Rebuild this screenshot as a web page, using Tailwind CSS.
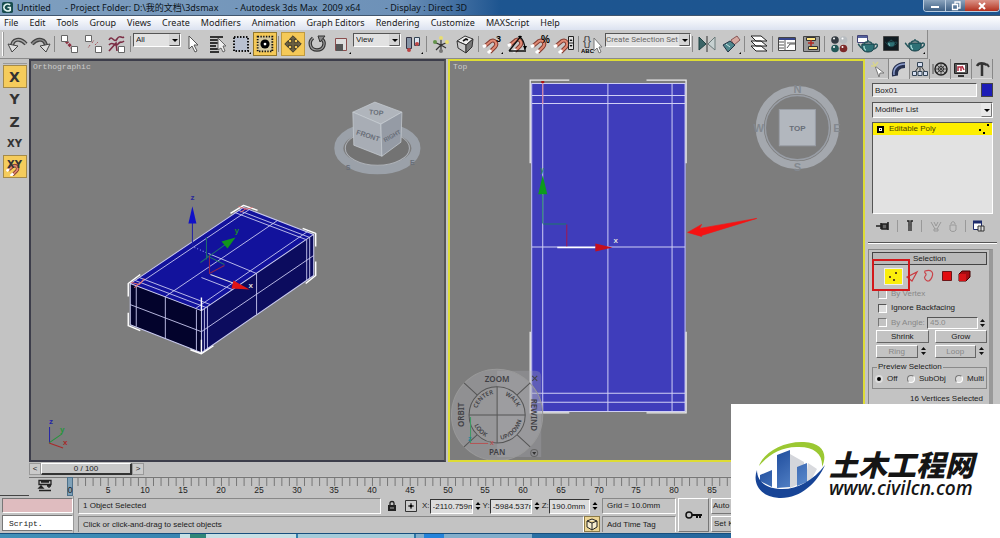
<!DOCTYPE html>
<html lang="en">
<head>
<meta charset="utf-8">
<title>Untitled - Autodesk 3ds Max 2009 x64</title>
<script src="https://cdn.jsdelivr.net/npm/@tailwindcss/browser@4"></script>
</head>
<body class="relative flex h-screen flex-col overflow-hidden bg-[#c3c3c3] font-['Liberation_Sans','Noto_Sans_CJK_SC',sans-serif] text-[9px] leading-3 text-[#1a1a1a]">

<svg class="hidden">
  <defs>
    <g id="magnet"><path d="M6 13l6-5c4-2 7 3 4 6l-5 5" fill="none" stroke="#813a30" stroke-width="4"/><path d="M6 13l6-5c4-2 7 3 4 6l-5 5" fill="none" stroke="#e08a74" stroke-width="2"/><path d="M4 14l3-2M9 20l3-3" stroke="#fff" stroke-width="3"/></g>
    <g id="teapot"><path d="M6 10c-1 6 2 8 6 8s7-2 6-8z" fill="#2d7176" stroke="#173c44"/><path d="M6 14C4 14 4 11 2 10M18 11c4-3 5 2 0 4M8 10c1-3 7-3 8 0M12 8V6" fill="none" stroke="#24565c" stroke-width="1.4"/><path d="M8 12c0 2 1 4 2 4" stroke="#a8dad8" stroke-width="1.5" fill="none"/></g>
    <g id="pointer"><path d="M8 4v13l3-3 3 6 2-1-3-6h4z" fill="#fff" stroke="#555"/></g>
  </defs>
</svg>

<header class="flex h-4 shrink-0 items-center border-b border-[#41566e] bg-linear-to-r from-[#7f9fbf] via-[#6d91b8] via-40% to-[#1d5590] to-50% pl-0.5 font-['Noto_Sans','Noto_Sans_CJK_SC',sans-serif]">
  <svg class="mr-1 size-[11px]" viewBox="0 0 12 12"><rect width="12" height="12" rx="2" fill="#164b4d"/><path d="M9 3C5 1 2 3 2 6s4 5 7 3V6H6" fill="none" stroke="#e1f3ef" stroke-width="1.8"/></svg>
  <h1 class="flex whitespace-nowrap text-[9px] text-[#0b1420]"><span class="w-12">Untitled</span><span class="w-[170px]">- Project Folder: D:\我的文档\3dsmax</span><span class="w-[150px]">- Autodesk 3ds Max&nbsp; 2009 x64</span><span>- Display : Direct 3D</span></h1>
  <div class="ml-auto flex h-3 self-start overflow-hidden rounded-b border border-t-0 border-[#b9ccdf]">
    <button aria-label="Minimize" class="flex w-[22px] items-center justify-center border-r border-[#b9ccdf] bg-linear-to-b from-[#8ba4bd] to-[#3d5f83]"><svg class="size-2.5" viewBox="0 0 10 10"><path d="M1 6h8" stroke="#fff" stroke-width="2"/></svg></button>
    <button aria-label="Restore" class="flex w-[19px] items-center justify-center bg-linear-to-b from-[#8ba4bd] to-[#3d5f83]"><svg class="size-2.5" viewBox="0 0 10 10"><path d="M4 3V1h5v6H7M1.500 3.500h5v5h-5z" fill="none" stroke="#fff" stroke-width="1.3"/></svg></button>
    <button aria-label="Close" class="flex w-[34px] items-center justify-center bg-linear-to-b from-[#d99186] to-[#b22d1b]"><svg class="size-2.5" viewBox="0 0 10 10"><path d="M2 2l6 6M8 2L2 8" stroke="#fff" stroke-width="2"/></svg></button>
  </div>
</header>

<nav class="flex h-[14px] shrink-0 items-center gap-[11px] bg-linear-to-b from-white to-[#dce2f0] pl-1 font-['Noto_Sans',sans-serif] whitespace-nowrap">
  <button>File</button><button>Edit</button><button>Tools</button><button>Group</button><button>Views</button><button>Create</button><button>Modifiers</button><button>Animation</button><button>Graph Editors</button><button>Rendering</button><button>Customize</button><button>MAXScript</button><button>Help</button>
</nav>

<div class="flex h-[29px] shrink-0 items-stretch">
<div class="flex items-center border-r border-b border-[#8a8a8a] bg-[#c8c8c8]">
  <span class="mr-px ml-0.5 h-6 w-0.5 border-x border-[#9a9a9a] border-l-white"></span>
  <button aria-label="Undo"><svg class="size-6" viewBox="0 0 24 24"><path d="M7 15c0-8 8-10 14-3" fill="none" stroke="#444" stroke-width="4"/><path d="M7 15c0-8 8-10 14-3" fill="none" stroke="#aaa" stroke-width="1.5"/><path d="M3 12l4 8 6-6z" fill="#ddd" stroke="#444"/></svg></button>
  <button aria-label="Redo"><svg class="size-6" viewBox="0 0 24 24"><path d="M17 15c0-8-8-10-14-3" fill="none" stroke="#444" stroke-width="4"/><path d="M17 15c0-8-8-10-14-3" fill="none" stroke="#888" stroke-width="1.500"/><path d="M21 12l-4 8-6-6z" fill="#ddd" stroke="#444"/></svg></button>
  <i class="mr-0.5 ml-px h-4 w-px bg-[#888]"></i>
  <button aria-label="Select and link"><svg class="size-6" viewBox="0 0 24 24"><path d="M9 9l7 8" stroke="#8d3142" stroke-width="3" stroke-dasharray="3 1"/><path d="M4.500 3.500h6v6h-6zM14.500 14.500h6v6h-6z" fill="#fff" stroke="#666"/></svg></button>
  <button aria-label="Unlink"><svg class="size-6" viewBox="0 0 24 24"><path d="M11 11l2-3M9 13l-2 3M14 13l3-3" stroke="#a6585f" stroke-dasharray="2 1"/><path d="M4.500 3.500h6v6h-6zM14.500 14.500h6v6h-6z" fill="#fff" stroke="#666"/></svg></button>
  <button aria-label="Bind to space warp"><svg class="size-6" viewBox="0 0 24 24"><path d="M4 8c3-6 5 4 8-1s4 0 7-2M4 13c4-5 6 3 9-1s3 0 6-3M4 19l7-8 1 8" fill="none" stroke="#7c2e45" stroke-width="1.600"/><path d="M13.500 14.500h6v6h-6z" fill="#fff" stroke="#666"/></svg></button>
  <i class="mr-0.5 ml-px h-4 w-px bg-[#888]"></i>
  <div class="relative -mt-2 h-[14px] w-12"><select aria-label="Selection filter" class="size-full appearance-none border border-[#555] border-r-white border-b-white bg-[#e2e2e2] pl-0.5 text-[8px]"><option>All</option></select><svg class="pointer-events-none absolute top-px right-px h-3 w-[11px] bg-[#d4d4d4]" viewBox="0 0 11 12"><path d="M.5 11.500h10V.5" stroke="#555" fill="none"/><path d="M3 5h6L6 8z"/></svg></div>
  <button aria-label="Select object"><svg class="size-6" viewBox="0 0 24 24"><use href="#pointer"/></svg></button>
  <button aria-label="Select by name"><svg class="size-6" viewBox="0 0 24 24"><path d="M5 5h13M5 8h9M5 11h9M5 14h6M5 17h9M5 20h9" stroke="#333" stroke-width="2"/><path d="M13 6v12l3-2 2 4 2-1-2-5h3z" fill="#eee" stroke="#666"/></svg></button>
  <button aria-label="Rectangular selection region"><svg class="size-6" viewBox="0 0 24 24"><path d="M5 5h14v14H5z" fill="#b9c1d1" stroke="#111" stroke-width="2" stroke-dasharray="1.500 1.500"/><path d="M22 20v2h-2z"/></svg></button>
  <button aria-label="Window crossing" class="border border-[#93772a] bg-[#f5c958]"><svg class="size-[22px]" viewBox="0 0 24 24"><path d="M4 4h16v16H4z" fill="#d5c9a0" stroke="#111" stroke-width="2" stroke-dasharray="1.500 1.500"/><circle cx="12" cy="12" r="5"/><circle cx="12" cy="12" r="1.500" fill="#fff"/></svg></button>
  <i class="mr-0.5 ml-px h-4 w-px bg-[#888]"></i>
  <button aria-label="Move" class="border border-[#c09a3e] bg-[#f5c958]"><svg class="size-[22px]" viewBox="0 0 24 24"><path d="M12 3l4 4h-2.500v3.500H17V8l4 4-4 4v-2.500h-3.500V17H16l-4 4-4-4h2.500v-3.500H7V16l-4-4 4-4v2.500h3.500V7H8z" fill="#6b6042" stroke="#222" stroke-width=".8"/></svg></button>
  <button aria-label="Rotate"><svg class="size-6" viewBox="0 0 24 24"><path d="M8 6c-5 4-3 12 4 12s9-7 5-11" fill="none" stroke="#333" stroke-width="3.500"/><path d="M8 6c-5 4-3 12 4 12s9-7 5-11" fill="none" stroke="#999" stroke-width="1.200"/><path d="M13 4l7 0-5 6z" fill="#888" stroke="#333"/></svg></button>
  <button aria-label="Scale"><svg class="size-6" viewBox="0 0 24 24"><path d="M6.500 6.500h11v12h-11z" fill="#ddd" stroke="#8a4d4d"/><path d="M7 12h7v7H7z" fill="#555"/><path d="M22 20v2h-2z"/></svg></button>
  <div class="relative -mt-2 h-[14px] w-12"><select aria-label="Coordinate system" class="size-full appearance-none border border-[#555] border-r-white border-b-white bg-[#e2e2e2] pl-0.5 text-[8px]"><option>View</option></select><svg class="pointer-events-none absolute top-px right-px h-3 w-[11px] bg-[#d4d4d4]" viewBox="0 0 11 12"><path d="M.5 11.500h10V.5" stroke="#555" fill="none"/><path d="M3 5h6L6 8z"/></svg></div>
  <button aria-label="Pivot center"><svg class="size-6" viewBox="0 0 24 24"><path d="M5.500 5.500h5v11h-5z" fill="#8795a7" stroke="#334"/><path d="M13.500 5.500h5v8h-5z" fill="#dce4ef" stroke="#345"/><circle cx="8" cy="18" r="2" fill="#b44"/><circle cx="16" cy="12" r="2" fill="#b44"/><path d="M22 20v2h-2z"/></svg></button>
  <i class="mr-0.5 ml-px h-4 w-px bg-[#888]"></i>
  <button aria-label="Manipulate"><svg class="size-6" viewBox="0 0 24 24"><path d="M12 6v13M5 10l7 3 7-3M12 13l-5 5M12 13l5 3" stroke="#333" stroke-width="1.200" fill="none"/><circle cx="12" cy="6" r="2" fill="#e8dd72"/><circle cx="18" cy="10" r="2" fill="#e8dd72"/><circle cx="6" cy="10" r="2" fill="#63934b"/><circle cx="12" cy="19" r="2" fill="#777"/></svg></button>
  <button aria-label="Keyboard shortcut override"><svg class="size-6" viewBox="0 0 24 24"><path d="M4 9l8-5 8 3-7 6z" fill="#eee" stroke="#333"/><path d="M4 9l9 4v8l-8-5z" fill="#ccc" stroke="#333"/><path d="M13 13l7-6-1 8-6 6z" fill="#777" stroke="#333"/><path d="M10 9l3-2 2 1" stroke="#111" stroke-width="1.800" fill="none"/></svg></button>
  <i class="mr-0.5 ml-px h-4 w-px bg-[#888]"></i>
  <button aria-label="Snaps toggle"><svg class="size-6" viewBox="0 0 24 24"><use href="#magnet" y="1" x="-2"/><text x="15" y="10" font-size="9" font-weight="bold">3</text><path d="M22 20v2h-2z"/></svg></button>
  <button aria-label="Angle snap"><svg class="size-6" viewBox="0 0 24 24"><use href="#magnet" x="-1"/><path d="M4 19h17M4 19L16 4M14 4c4 3 6 8 6 14" stroke="#111" fill="none" stroke-width="1.300"/><path d="M13 4h4l-2 3zM18 14h4l-2 4z"/></svg></button>
  <button aria-label="Percent snap"><svg class="size-6" viewBox="0 0 24 24"><use href="#magnet" y="1" x="-2"/><text x="12" y="11" font-size="10" font-weight="bold">%</text></svg></button>
  <button aria-label="Spinner snap"><svg class="size-6" viewBox="0 0 24 24"><use href="#magnet" y="1" x="-3"/><path d="M15.500 4.500h5v13h-5zM15 11h6" fill="#ddd" stroke="#222"/><path d="M16.500 9l1.500-2 1.500 2zM16.500 13l1.500 2 1.500-2z"/></svg></button>
  <i class="mr-0.5 ml-px h-4 w-px bg-[#888]"></i>
  <button aria-label="Edit named selection sets"><svg class="size-6" viewBox="0 0 24 24"><text x="2" y="13" font-size="12" fill="#444">{}</text><text x="0" y="21" font-size="6" font-weight="bold">ABC</text><path d="M13 6v13l3-3 2 5 2-1-2-5h3z" fill="#fff" stroke="#777"/></svg></button>
  <div class="relative -mt-2 h-[14px] w-[86px]"><select aria-label="Named selection sets" class="size-full appearance-none border border-[#555] border-r-white border-b-white bg-[#e2e2e2] font-[Roboto,sans-serif] text-[8px] text-[#666]"><option>Create Selection Set</option></select><svg class="pointer-events-none absolute top-px right-px h-3 w-[11px] bg-[#d4d4d4]" viewBox="0 0 11 12"><path d="M.5 11.500h10V.5" stroke="#555" fill="none"/><path d="M3 5h6L6 8z"/></svg></div>
  <i class="mr-0.5 ml-px h-4 w-px bg-[#888]"></i>
  <button aria-label="Mirror"><svg class="size-6" viewBox="0 0 24 24"><path d="M4 5v13l7-6z" fill="#3b6467" stroke="#244"/><path d="M20 5v13l-7-6z" fill="#c7d1d1" stroke="#6a7a7a"/><path d="M12 4v16" stroke="#333"/></svg></button>
  <button aria-label="Align"><svg class="size-6" viewBox="0 0 24 24"><path d="M12 8l6-4 3 4-6 5z" fill="#d5a9a1" stroke="#855"/><path d="M4 13l7-4 5 4-7 7z" fill="#4e868c" stroke="#234"/><path d="M7 12l4 3" stroke="#cfe6e6"/><path d="M22 20v2h-2z"/></svg></button>
  <i class="mr-0.5 ml-px h-4 w-px bg-[#888]"></i>
  <button aria-label="Layer manager"><svg class="size-6" viewBox="0 0 24 24"><path d="M4 14h10l6 5H9zM4 9h10l6 5H9zM4 4h10l6 5H9z" fill="#fff" stroke="#222"/></svg></button>
  <i class="mr-0.5 ml-px h-4 w-px bg-[#888]"></i>
  <button aria-label="Curve editor"><svg class="size-6" viewBox="0 0 24 24"><path d="M3.500 5.500h17v13h-17z" fill="#fff" stroke="#444"/><path d="M4 7h16" stroke="#37458c" stroke-width="2"/><path d="M4 10h5M4 13h5M4 16h5M10 8v10M12 16l3-4h5M12 11h8" stroke="#555" fill="none"/></svg></button>
  <button aria-label="Schematic view"><svg class="size-6" viewBox="0 0 24 24"><path d="M4.500 4.500h16v15h-16z" fill="#999" stroke="#444"/><path d="M7.500 5.500h9v3h-9zM9.500 14.500h9v3h-9z" fill="#ffe681" stroke="#333"/><path d="M12 8v6M9 11h6" stroke="#b32a20" stroke-width="1.500"/></svg></button>
  <i class="mr-0.5 ml-px h-4 w-px bg-[#888]"></i>
  <button aria-label="Material editor"><svg class="size-6" viewBox="0 0 24 24"><circle cx="8" cy="8" r="3.800" fill="#333b42"/><circle cx="16.500" cy="8" r="3.800" fill="#b7bcc0"/><circle cx="8" cy="16.500" r="3.800" fill="#225857"/><circle cx="16.500" cy="16.500" r="3.800" fill="#7c2929"/><g fill="#fff"><circle cx="7" cy="6.500" r="1"/><circle cx="15.500" cy="6.500" r="1"/><circle cx="7" cy="15" r="1"/><circle cx="15.500" cy="15" r="1"/></g></svg></button>
  <i class="mr-0.5 ml-px h-4 w-px bg-[#888]"></i>
  <button aria-label="Render setup"><svg class="size-6" viewBox="0 0 24 24"><path d="M2.500 3.500h10v7h-10z" fill="#fff" stroke="#447"/><path d="M3 5h9" stroke="#54619c" stroke-width="2"/><use href="#teapot" x="1" y="2"/></svg></button>
  <button aria-label="Rendered frame window"><svg class="size-6" viewBox="0 0 24 24"><path d="M4.500 4.500h15v14h-15z" fill="#111c22" stroke="#444"/><g transform="translate(5 4) scale(.6)"><use href="#teapot"/></g></svg></button>
  <button aria-label="Quick render"><svg class="size-6" viewBox="0 0 24 24"><use href="#teapot" y="1"/><path d="M22 20v2h-2z"/></svg></button>
</div>
</div>

<main class="flex min-h-0 flex-1">
  <aside class="flex w-[29px] shrink-0 flex-col items-center border-b border-[#444] pt-1">
    <div class="h-px w-6 bg-[#999]"></div>
    <div class="flex flex-col pt-px font-['DejaVu_Sans',sans-serif] font-bold text-[#333]">
      <button class="h-[23px] w-6 border border-[#a58a48] bg-[#f5cc5c] text-[14px]">X</button>
      <button class="h-[22px] w-6 text-[14px]">Y</button>
      <button class="h-[23px] w-6 text-[14px]">Z</button>
      <button class="h-[22px] w-6 text-[10px]">XY</button>
      <button class="relative h-[23px] w-6 border border-[#a58a48] bg-[#f5cc5c] pb-1 text-[10px]"><svg class="absolute inset-0 size-5" viewBox="0 0 24 24"><use href="#magnet" y="4" x="-1"/></svg><span class="relative">XY</span></button>
    </div>
  </aside>

  <section class="flex min-w-0 flex-1 flex-col">
    <div class="flex min-h-0 flex-1 gap-0.5">
      <div class="min-w-0 flex-1 border-2 border-[#3c3d4a] border-r-[#555] bg-[#7d7d7d]">
        <svg class="size-full" viewBox="31 62 414 398" preserveAspectRatio="xMinYMin slice">
          <text x="33" y="70" font-family="Liberation Mono" font-size="8" fill="#ccc">Orthographic</text>
          <g stroke-linejoin="round">
            <path d="M130 284L243 208l70 27-112 76z" fill="#12129c"/>
            <path d="M130 284l71 27v42l-71-28z" fill="#03032c"/>
            <path d="M201 311l112-76v41l-112 77z" fill="#0c0c5e"/>
            <g fill="none" stroke="#c9caf0">
              <path d="M130 284L243 208l70 27-112 76zM130 284v41l71 28V311M201 353l112-77v-41"/>
              <path d="M136 286L249 210M195 309L307 232M165 297L277 221M208 254l48 20v41M201 278l31 12M135 281l71 27M139 278l71 27M234 213l71 27M238 211l71 27M130 305l71 27 112-76M165 297v42M136 286v41M196 310v41M204 309v42M207 307v42M306 240v41M309 238v41" stroke-width=".9"/>
              <path d="M128 297v-13l12-9M128 313v13l12 5M190 350l11 4 12-8M230 214l13-8 14 5M302 229l13 5v13M315 262v14l-10 8M201 298v13M201 340v13" stroke="#fff" stroke-width="1.400"/>
            </g>
            <path d="M131 283l8 2 5-6M138 285l-4 3M238 207l8 3 6-2M240 213l6-4" fill="none" stroke="#e26b6b"/>
          </g>
          <path d="M192 246v-24" stroke="#2020a5"/><path d="M188 224l4-17 4 17z" fill="#1010c8"/><text x="190" y="201" font-size="8" font-weight="bold" fill="#2a2a99">z</text>
          <path d="M194 248l14 6" stroke="#99f" stroke-dasharray="1 2"/>
          <path d="M200 263l25-18M206 238v22M206 256l18 9" stroke="#1f6f6d" fill="none"/><path d="M221 242l14-4-8 11z" fill="#11951c"/><text x="234" y="234" font-size="8" font-weight="bold" fill="#1e8b2b">y</text>
          <path d="M209 256v18l15-8" stroke="#8f2650" fill="none"/><path d="M210 275l24 9" stroke="#ddd"/><path d="M233 281l16 9-18-1z" fill="#e01515"/><text x="248" y="288" font-size="8" font-weight="bold" fill="#ddd">x</text>
          <g fill="none"><path d="M49.500 443v-16" stroke="#2525a8"/><path d="M49 443l13-9" stroke="#22963a"/><path d="M49 443l14 5" stroke="#a82929"/></g>
          <g font-size="8" font-weight="bold"><text x="49" y="424" fill="#2525a8">z</text><text x="60" y="432" fill="#22963a">y</text><text x="63" y="445" fill="#a82929">x</text></g>
          <ellipse cx="376.500" cy="149" rx="38.500" ry="21.500" fill="none" stroke="#9ba1a9" stroke-width="9"/>
          <ellipse cx="376.500" cy="149" rx="32" ry="17" fill="#737373" stroke="#aeb2b8"/>
          <g stroke="#c9ced4" stroke-width=".7"><path d="M374 103l27 10-21 12-28-12z" fill="#b0b5bc"/><path d="M352 113l28 12 1 32-28-11z" fill="#a8adb5"/><path d="M380 125l21-12-1 30-19 14z" fill="#959ba5"/></g>
          <g font-size="8" font-weight="bold" fill="#686e78"><text transform="translate(368 115) rotate(6)" font-size="7">TOP</text><text transform="translate(355 135) rotate(18)" font-size="7">FRONT</text><text transform="translate(384 143) rotate(-29)" font-size="6">RIGHT</text><text x="345" y="171" font-size="7">S</text><text x="409" y="166" font-size="7">E</text></g>
        </svg>
      </div>
      <div class="min-w-0 flex-1 border-2 border-[#dedc35] bg-[#7d7d7d]">
        <svg class="size-full" viewBox="450 62 413 398" preserveAspectRatio="xMinYMin slice">
          <text x="453" y="70" font-family="Liberation Mono" font-size="8" fill="#ccc">Top</text>
          <path d="M531 84h154v328H531z" fill="#3f3dbb"/>
          <path d="M531.500 84.500h153v327h-153zM542.500 84v328M607.500 84v328M671.500 84v328M531 96.500h154M531 104.500h154M531 247.500h154M531 393.500h154M531 402.500h154" fill="none" stroke="#cfcff5"/>
          <path d="M569 81h-39v83M646 81h39.500v83M530 332v81h39M646 413h39.500v-81" fill="none" stroke="#eee" stroke-width="1.300"/>
          <path d="M542.500 83v22" stroke="#d87a9a"/><path d="M541 83h3" stroke="#b01010" stroke-width="2"/>
          <path d="M542.500 224v-29M543 224.500h23" stroke="#1c7a68"/><path d="M538 195l4.500-19 4.500 19z" fill="#0d9b1c"/><text x="540" y="173" font-size="7" font-weight="bold" fill="#2c8560">y</text>
          <path d="M566.500 225v22" stroke="#a3184e"/><path d="M557 248h38" stroke="#fff" stroke-width="1.500"/><path d="M595 244l17 4-17 4z" fill="#c60f1c"/><text x="613" y="244" font-size="8" font-weight="bold" fill="#ddd">x</text>
          <path d="M687 233l14-8-2 4 57-10-55 17 0 1z" fill="#f51212" stroke="#f51212" stroke-width=".6"/>

          <circle cx="796.500" cy="128.500" r="37.500" fill="none" stroke="#a4a8ae" stroke-width="8"/><circle cx="796.500" cy="128.500" r="32" fill="none" stroke="#999ea6" stroke-width="1.500"/>
          <path d="M778.500 110.500h36v36h-36z" fill="#b2b7be" stroke="#9a9fa7"/>
          <g font-weight="bold" fill="#686e78" text-anchor="middle"><text x="796.500" y="132" font-size="8">TOP</text><g font-size="11" fill="#83888f"><text x="796.500" y="94">N</text><text x="796.500" y="172">S</text><text x="758" y="133">W</text><text x="836" y="133">E</text></g></g>

          <path d="M497 371h38q6 0 6 6v80h-44z" fill="#aaaab2" fill-opacity=".3"/>
          <circle cx="497" cy="415" r="45.500" fill="#b5b5bb" fill-opacity=".35" stroke="#999"/>
          <circle cx="497" cy="415" r="28" fill="#aaa" fill-opacity=".3" stroke="#555"/>
          <path d="M497 387v56M469 415h56M477 395l-13-12M517 395l13-12M477 435l-13 12M517 435l13 12" stroke="#555"/>
          <path id="arcTop" d="M476 415a21 21 0 0 1 42 0" fill="none"/><path id="arcBottom" d="M472 415a25 25 0 0 0 50 0" fill="none"/>
          <g font-family="Noto Sans" font-weight="600" fill="#3f3f44" text-anchor="middle">
            <text x="497" y="382" font-size="8">ZOOM</text><text x="497" y="455" font-size="8">PAN</text>
            <text transform="translate(464 415) rotate(-90)" font-size="8">ORBIT</text><text transform="translate(531 415) rotate(90)" font-size="8">REWIND</text>
            <text font-size="6"><textPath href="#arcTop" startOffset="27%">CENTER</textPath></text><text font-size="6"><textPath href="#arcTop" startOffset="75%">WALK</textPath></text>
            <text font-size="6"><textPath href="#arcBottom" startOffset="24%">LOOK</textPath></text><text font-size="6"><textPath href="#arcBottom" startOffset="74%">UP/DOWN</textPath></text>
          </g>
          <path d="M532 376l5 5M537 376l-5 5" stroke="#444"/><circle cx="534" cy="453" r="3.500" fill="none" stroke="#666"/><path d="M532 452h4l-2 3z" fill="#333"/>
          <path d="M470.500 443v-26" stroke="#3c9b62"/><path d="M470 443.500h18" stroke="#b45454"/><text x="468" y="441" font-size="7" font-weight="bold" fill="#248697">z</text><text x="490" y="445" font-size="7" font-weight="bold" fill="#b45454">x</text>
        </svg>
      </div>
    </div>
    <div class="flex h-[14px] shrink-0 items-center bg-[#bfbfbf]">
      <button class="h-3 w-3 border border-[#999] bg-[#cacaca] text-[8px] leading-[10px]">&lt;</button>
      <button class="h-3 w-[91px] border border-white border-r-2 border-b-2 border-r-[#333] border-b-[#333] bg-[#c8c8c8] text-[8px] leading-[9px]">0 / 100</button>
      <button class="h-3 w-3 border border-[#999] bg-[#cacaca] text-[8px] leading-[10px]">&gt;</button>
    </div>
    <div class="h-5 shrink-0">
      <svg class="size-full" viewBox="29 476 836 20" preserveAspectRatio="xMinYMin slice">
        <path d="M29 477.500h836" stroke="#777"/>
        <path d="M77.500 482h755" stroke="#777" stroke-width="8" stroke-dasharray="1 6.550"/>
        <rect x="67.500" y="477.500" width="5" height="18" fill="#7fa1b8" stroke="#4d7089"/>
        <path d="M39 480.500h12v4H39zM39 490.500h12M41 488v-2M41 486l-2 2h4zM49 485v3M47 486h4M41 482h8" fill="none" stroke="#222" stroke-width="1.300"/>
        <g font-size="8.500" text-anchor="middle" fill="#222"><text x="70" y="493">0</text><text x="108" y="493">5</text><text x="145" y="493">10</text><text x="183" y="493">15</text><text x="221" y="493">20</text><text x="259" y="493">25</text><text x="297" y="493">30</text><text x="334" y="493">35</text><text x="372" y="493">40</text><text x="410" y="493">45</text><text x="448" y="493">50</text><text x="485" y="493">55</text><text x="523" y="493">60</text><text x="561" y="493">65</text><text x="599" y="493">70</text><text x="636" y="493">75</text><text x="674" y="493">80</text><text x="712" y="493">85</text></g>
      </svg>
    </div>
  </section>

  <aside class="w-[135px] shrink-0 overflow-hidden pr-[7px] pl-[7px] text-[8px] leading-3">
    <div class="-ml-1 flex h-5 items-center border-b border-[#ddd]">
      <button aria-label="Create" class="flex h-5 w-[21px] items-center justify-center border-r border-[#888]"><svg class="size-4" viewBox="0 0 16 16"><path d="M5 5l9 7-4 0-1 4z" fill="#fff" stroke="#777"/><path d="M3 1l2 4-4 0M8 1L5 5" stroke="#d8d48e" stroke-width="1.500" fill="none"/></svg></button>
      <button aria-label="Modify" class="flex h-5 w-[21px] items-center justify-center border-r border-[#888] bg-[#d0d0d0]"><svg class="size-4" viewBox="0 0 16 16"><path d="M4 15C3 8 7 4 14 4" fill="none" stroke="#27314f" stroke-width="6"/><path d="M3 14C2 7 7 3 14 3" fill="none" stroke="#8fa0cf" stroke-width="1.500"/></svg></button>
      <button aria-label="Hierarchy" class="flex h-5 w-[21px] items-center justify-center border-r border-[#888]"><svg class="size-4" viewBox="0 0 16 16"><path d="M8 5v5M7 5l-4 6M9 5l4 6" stroke="#333"/><path d="M5.500 1.500h5v4h-5zM.5 10.500h4v4h-4zM6 10.500h4v4H6zM11.500 10.500h4v4h-4z" fill="#d5def0" stroke="#345"/></svg></button>
      <button aria-label="Motion" class="flex h-5 w-[21px] items-center justify-center border-r border-[#888]"><svg class="size-4" viewBox="0 0 16 16"><circle cx="9" cy="8" r="6" fill="#bbb" stroke="#222" stroke-width="1.500"/><circle cx="9" cy="8" r="2.500" fill="#eee" stroke="#222"/><path d="M9 2v12M3 8h12M5 4l8 8M13 4l-8 8M1 3v10" stroke="#333" stroke-width=".8"/></svg></button>
      <button aria-label="Display" class="flex h-5 w-[21px] items-center justify-center border-r border-[#888]"><svg class="size-4" viewBox="0 0 16 16"><path d="M1.500 2.500h13v10h-13z" fill="#555" stroke="#222"/><path d="M4 4h8v7H4z" fill="#fff"/><path d="M5 10V6h3v4M9 5l2 4" stroke="#b32b40" stroke-width="1.500" fill="none"/><path d="M5 15h6" stroke="#333" stroke-width="2"/></svg></button>
      <button aria-label="Utilities" class="flex h-5 w-[21px] items-center justify-center border-r border-[#888]"><svg class="size-4" viewBox="0 0 16 16"><path d="M3 5c2-4 7-3 10-1M8 3v12" stroke="#333" stroke-width="2.500" fill="none"/><path d="M13 3l2 3" stroke="#333" stroke-width="2"/></svg></button>
    </div>
    <div class="mt-1 flex items-center gap-1">
      <input aria-label="Object name" value="Box01" class="h-[14px] w-0 flex-1 border border-[#555] border-r-white border-b-white bg-[#e0e0e0] pl-0.5">
      <button aria-label="Object color" class="h-[14px] w-3 border border-[#444] bg-[#1c1cb6]"></button>
    </div>
    <div class="relative mt-[5px] h-4"><select aria-label="Modifier List" class="size-full appearance-none border border-[#555] border-r-white border-b-white bg-[#e0e0e0] pl-0.5"><option>Modifier List</option></select><svg class="pointer-events-none absolute top-px right-px h-[14px] w-[11px] bg-[#e8e8e8]" viewBox="0 0 11 14"><path d="M.5 13.500h10V.5" stroke="#777" fill="none"/><path d="M3 6h6L6 9z"/></svg></div>
    <div class="mt-1 h-[92px] border border-[#555] border-r-white border-b-white bg-[#e2e2e2]">
      <div class="flex h-3 items-center bg-[#fdee00] pl-1"><svg class="mr-[5px] size-[7px]" viewBox="0 0 7 7"><path d="M0 0h7v7H0z"/><path d="M2 2h3v3H2z" fill="#fff"/><path d="M3 3h1v1H3z"/></svg><span class="flex-1 text-[#4a4400]">Editable Poly</span><svg class="mr-0.5 size-3" viewBox="0 0 12 12"><path d="M9 1h2v2H9zM1 6h2v2H1zM5 9h2v2H5z"/></svg></div>
    </div>
    <div class="mt-1 flex h-4 items-center justify-between pr-2 pl-1">
      <button aria-label="Pin stack"><svg class="h-3 w-[14px]" viewBox="0 0 14 12"><path d="M0 6h5M5 3v6M6 4h5v5H6zM12 2v8" stroke="#222" stroke-width="1.600" fill="#666"/></svg></button><i class="h-3 w-px bg-[#999]"></i>
      <button aria-label="Show end result"><svg class="h-3 w-2" viewBox="0 0 8 12"><path d="M1 1h2v10M7 1H5v10" stroke="#222" stroke-width="1.300" fill="none"/><path d="M2 5h4" stroke="#555"/></svg></button><i class="h-3 w-px bg-[#999]"></i>
      <button aria-label="Make unique"><svg class="size-3" viewBox="0 0 12 12"><path d="M1 2l4 7M11 2L7 9M4 2l2 4 2-4M4 9h4v2H4z" stroke="#999" fill="none"/></svg></button>
      <button aria-label="Remove modifier"><svg class="h-3 w-2" viewBox="0 0 8 12"><path d="M1 5h6v5c-1 2-5 2-6 0zM2 4c0-3 4-3 4 0" stroke="#999" fill="none"/></svg></button><i class="h-3 w-px bg-[#999]"></i>
      <button aria-label="Configure sets"><svg class="size-3" viewBox="0 0 12 12"><path d="M.5 1.500h8v8h-8z" fill="#fff" stroke="#1e2c6c"/><path d="M0 2h9" stroke="#1e2c6c" stroke-width="3"/><path d="M5 6h6v5H5zM8 6v5" fill="#ddd" stroke="#333"/></svg></button>
    </div>
    <div class="-mx-1 mt-2 mb-[5px] h-0.5 border-b border-white bg-[#555]"></div>
    <div class="-ml-1 border-t border-l border-r-4 border-white border-t-[#888] border-r-[#999] border-l-[#888] pt-0.5 pr-0.5 pl-[3px]">
      <button class="relative block h-[13px] w-full border border-[#444] bg-[#b9b9b9] text-center leading-[11px]"><span class="absolute left-1">-</span>Selection</button>
      <div class="relative mt-0.5 flex h-[18px] items-center pl-3">
        <button aria-label="Vertex" class="mr-0.5 h-[17px] w-[19px] border border-[#eee] bg-[#fbee0c]"><svg class="size-4" viewBox="0 0 16 16"><path d="M10 3h2v2h-2zM4 7h2v2H4zM8 10h2v2H8z" fill="#62451a"/></svg></button>
        <button aria-label="Edge"><svg class="h-4 w-[15px]" viewBox="0 0 15 16"><path d="M2 9l10-5-5 9z" fill="none" stroke="#c93a40" stroke-width="1.200"/></svg></button>
        <button aria-label="Border"><svg class="h-4 w-[18px]" viewBox="0 0 18 16"><path d="M5 3c6-2 9 1 7 6s-5 5-7 2 2-3 1-5-2-1-1-3z" fill="none" stroke="#c9444a" stroke-width="1.200"/></svg></button>
        <button aria-label="Polygon"><svg class="h-4 w-[18px]" viewBox="0 0 18 16"><path d="M4.500 3.500h9v9h-9z" fill="#e30d10" stroke="#6d1518"/></svg></button>
        <button aria-label="Element"><svg class="h-4 w-4" viewBox="0 0 16 16"><path d="M3 6l3-3h8v6l-4 4H3z" fill="#a40d12" stroke="#400"/><path d="M3 6h7v7H3z" fill="#d71317"/></svg></button>
        <div class="pointer-events-none absolute -top-2 left-0 z-10 h-8 w-[38px] border-2 border-[#d3191c]"></div>
      </div>
      <label class="mt-0.5 flex h-[14px] items-center gap-1 pl-1.5 text-[#888]"><input type="checkbox" disabled class="size-[9px] appearance-none border border-[#777] border-r-white border-b-white">By Vertex</label>
      <label class="flex h-[14px] items-center gap-1 pl-1.5"><input type="checkbox" class="size-[9px] appearance-none border border-[#555] border-r-white border-b-white bg-[#ddd]">Ignore Backfacing</label>
      <div class="flex h-[15px] items-center pl-1.5 text-[#888]"><label class="flex w-[49px] items-center gap-1 whitespace-nowrap"><input type="checkbox" disabled class="size-[9px] appearance-none border border-[#777] border-r-white border-b-white">By Angle:</label><input aria-label="Angle" value="45.0" disabled class="h-3 w-0 flex-1 border border-[#555] border-r-white border-b-white bg-[#c8c8c8] pl-0.5"><svg class="h-3 w-[9px]" viewBox="0 0 9 12"><path d="M2 5l2.500-3L7 5zM2 7l2.500 3L7 7z" fill="#111"/></svg></div>
      <div class="grid grid-cols-2 gap-x-1.5 gap-y-0.5 pl-1 leading-[11px]">
        <button class="h-[13px] border border-white border-r-[#666] border-b-[#666]">Shrink</button><button class="h-[13px] border border-white border-r-[#666] border-b-[#666]">Grow</button>
        <div class="flex text-[#888]"><button class="h-[13px] flex-1 border border-white border-r-[#666] border-b-[#666]" disabled>Ring</button><svg class="h-3 w-[11px]" viewBox="0 0 9 12"><path d="M2 5l2.500-3L7 5zM2 7l2.500 3L7 7z" fill="#111"/></svg></div>
        <div class="flex text-[#888]"><button class="h-[13px] flex-1 border border-white border-r-[#666] border-b-[#666]" disabled>Loop</button><svg class="h-3 w-[11px]" viewBox="0 0 9 12"><path d="M2 5l2.500-3L7 5zM2 7l2.500 3L7 7z" fill="#111"/></svg></div>
      </div>
      <fieldset class="mt-[3px] border border-[#8a8a8a] pb-[3px]"><legend class="ml-1 px-px">Preview Selection</legend>
        <div class="flex items-center justify-between px-0.5">
          <label class="flex items-center gap-1"><input type="radio" name="preview" checked class="size-2 appearance-none rounded-full border border-[#777] bg-[#eee] checked:border-2 checked:border-[#ddd] checked:bg-black">Off</label>
          <label class="flex items-center gap-1"><input type="radio" name="preview" class="size-2 appearance-none rounded-full border border-[#777] border-r-white border-b-white bg-[#ddd]">SubObj</label>
          <label class="flex items-center gap-1"><input type="radio" name="preview" class="size-2 appearance-none rounded-full border border-[#777] border-r-white border-b-white bg-[#ddd]">Multi</label>
        </div>
      </fieldset>
      <p class="mt-1 pr-1 text-right">16 Vertices Selected</p>
    </div>
  </aside>
</main>

<footer class="flex h-[37px] shrink-0 text-[8px]">
  <div class="flex w-[74px] flex-col gap-0.5 border-r border-[#999] py-0.5 pl-0.5">
    <div class="h-[15px] border border-[#777] border-r-white border-b-white bg-[#dfbcbf]"></div>
    <input aria-label="Script" value="Script." class="h-4 w-full border border-[#777] border-r-white bg-white pl-1.5 font-['Liberation_Mono',monospace]">
  </div>
  <div class="flex flex-1 flex-col gap-0.5 pt-0.5 pl-1">
    <div class="flex h-4 items-center">
      <div class="h-4 w-[303px] border border-[#888] border-r-white border-b-white pl-1 leading-[14px]">1 Object Selected</div>
      <button aria-label="Lock selection" class="ml-1.5"><svg class="h-3 w-2.5" viewBox="0 0 10 12"><path d="M1 5h8v6H1z" fill="#222"/><path d="M3 5V3c0-2 4-2 4 0v2" fill="none" stroke="#222" stroke-width="1.300"/><path d="M3 8h4" stroke="#aaa"/></svg></button>
      <button aria-label="Absolute mode" class="mr-1 ml-2"><svg class="h-3 w-[13px]" viewBox="0 0 13 12"><path d="M.5.5h11v11H.5z" fill="#ccc" stroke="#333"/><path d="M6 3v6M3 6h6" stroke="#222"/><circle cx="6" cy="6" r="1.500"/></svg></button>
      <label for="cx">X:</label><input id="cx" value="-2110.759mm" class="h-[15px] w-[43px] border border-[#333] border-r-white border-b-white bg-[#dcdcdc] pl-0.5"><svg class="h-3 w-2.5" viewBox="0 0 9 12"><path d="M2 5l2.500-3L7 5zM2 7l2.500 3L7 7z"/></svg>
      <label for="cy">Y:</label><input id="cy" value="-5984.537mm" class="h-[15px] w-[42px] border border-[#333] border-r-white border-b-white bg-[#dcdcdc] pl-0.5"><svg class="h-3 w-2.5" viewBox="0 0 9 12"><path d="M2 5l2.500-3L7 5zM2 7l2.500 3L7 7z"/></svg>
      <label for="cz">Z:</label><input id="cz" value="190.0mm" class="h-[15px] w-[41px] border border-[#333] border-r-white border-b-white bg-[#dcdcdc] pl-0.5"><svg class="h-3 w-2.5" viewBox="0 0 9 12"><path d="M2 5l2.500-3L7 5zM2 7l2.500 3L7 7z"/></svg>
    </div>
    <div class="flex h-4 items-center">
      <div class="h-4 flex-1 border border-[#888] border-r-white border-b-0 pl-1 leading-[15px]">Click or click-and-drag to select objects</div>
      <button aria-label="Adaptive degradation" class="border border-[#8c7a46] bg-[#ecd595]"><svg class="size-[14px]" viewBox="0 0 14 14"><path d="M2 4l5-2 5 2v6l-5 3-5-3zM2 4l5 2 5-2M7 6v7" fill="#f8eed0" stroke="#222"/></svg></button>
    </div>
  </div>
  <div class="flex w-[76px] flex-col gap-0.5 pt-0.5 pl-0.5">
    <div class="h-4 border border-[#888] border-r-white border-b-white pl-1 leading-[14px]">Grid = 10.0mm</div>
    <div class="h-4 border border-[#888] border-r-white border-b-0 pl-1 leading-[15px]">Add Time Tag</div>
  </div>
  <button aria-label="Set keys" class="mx-0.5 mt-0.5 flex h-[34px] w-[31px] items-center justify-center border border-white border-r-[#777] border-b-[#777]"><svg class="h-2.5 w-[18px]" viewBox="0 0 18 10"><circle cx="4" cy="5" r="3" fill="none" stroke="#111" stroke-width="1.500"/><path d="M7 5h10M12 5v3M15 5v3" stroke="#111" stroke-width="2"/></svg></button>
  <div class="flex w-[289px] flex-col gap-0.5 pt-0.5">
    <button class="h-4 w-[70px] border border-white border-b-[#777] pl-px text-left">Auto Key</button>
    <button class="h-4 w-[70px] border border-white border-b-[#777] pl-0.5 text-left">Set Key</button>
  </div>
</footer>

<div class="flex h-[5px] shrink-0 gap-0.5 border-t border-[#174f7d] bg-linear-to-r from-[#4190b8] via-[#2b71a5] to-[#1d5a94] pl-[180px]">
  <div class="w-[116px] bg-[#c7dfe4] pl-2.5"><div class="h-1 w-4 bg-[#2f8578]"></div></div>
  <div class="w-[116px] bg-[#a5cbd9]"></div>
  <div class="w-[116px] bg-[#83aecb] pl-2"><div class="h-1 w-5 bg-[#2583da]"></div></div>
</div>

<a href="#" aria-label="civilcn" class="absolute right-0 bottom-0 flex h-[134px] w-[269px] items-center bg-white pl-6">
  <svg class="h-16 w-[74px] shrink-0" viewBox="755 439 74 64">
    <defs><linearGradient id="tower" x1="0" y1="0" x2="1" y2="1"><stop stop-color="#123f92"/><stop offset="1" stop-color="#5d8cce"/></linearGradient></defs>
    <path d="M790 454l14 8v20l-14 6z" fill="#d4d6db"/><path d="M808 463l9 6-7 13-5 2z" fill="#d9dade"/>
    <path d="M777 455l13-5v37l-13 1zM797 467l10-4v19l-10 4zM760 475l12-5v17l-12-6z" fill="url(#tower)"/>
    <path d="M759 466c4-13 24-25 45-24 19 1 24 12 18 25 1-12-7-20-23-20-16-1-30 7-40 19z" fill="#9bc832"/>
    <path d="M757 470c-5 13 3 27 22 28 21 1 38-15 46-33-12 16-29 25-45 24-15-1-23-8-23-19z" fill="#174496"/>
  </svg>
  <div class="pt-1 whitespace-nowrap text-[#151515] italic">
    <div class="font-['Noto_Sans_CJK_SC',sans-serif] text-[29px] leading-[30px] font-black">土木工程网</div>
    <div class="font-['Open_Sans',sans-serif] text-[19px] leading-5 font-semibold">www.civilcn.com</div>
  </div>
</a>
</body>
</html>
